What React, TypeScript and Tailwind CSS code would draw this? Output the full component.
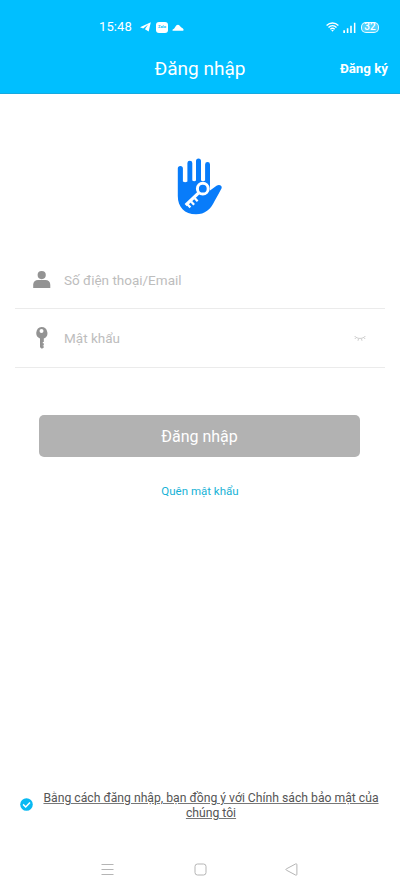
import { useState } from 'react'

function StatusBar() {
  return (
    <div className="flex h-[44px] items-center pl-[99px] pr-[21px] pt-[10px] text-white">
      <span className="w-[41px] text-[13px] leading-4 tracking-[0.1px]">15:48</span>
      <svg className="h-[10px] w-[11px]" viewBox="0 0 11 10" fill="currentColor">
        <path d="M10.8.3 0 5.2l3.200 1.300L8 2.500 4.900 7.200 8.700 9.600z" />
      </svg>
      <span className="ml-[5px] flex h-[11px] w-[12px] items-center justify-center rounded-[3px] bg-white text-[4px] font-bold leading-none text-[#00bfff]">
        Zalo
      </span>
      <svg className="ml-[4px] mt-[1px] h-[7px] w-[12px]" viewBox="0 0 12 7" fill="currentColor">
        <path d="M.9 6.700C.2 6.700.2 5.400 1.500 5 2.900 4.600 3.600.7 5.900.7c1.600 0 2.200 1.700 3.200 2.500.8.700 2.500 1.200 2.500 2.500 0 .7-.4 1-1 1z" />
      </svg>
      <svg className="ml-auto h-[10px] w-[13px]" viewBox="0 0 13 10" fill="none" stroke="currentColor" strokeWidth="1.4">
        <path d="M.6 3.400C4 .1 9 .1 12.400 3.400M2.500 5.400c2.300-2.200 5.700-2.200 8 0M4.300 7.200c1.300-1.100 3.100-1.100 4.400 0" />
        <path d="M5.200 8.100h2.600L6.500 9.700z" fill="currentColor" stroke="none" />
      </svg>
      <svg className="ml-[4px] h-[11px] w-[13px]" viewBox="0 0 13 11" fill="currentColor">
        <path d="M.3 8.200h1.700V11H.3zM3.800 6.300h1.600V11H3.800zM7.200 3.700h1.600V11H7.200zM10.900.7h1.500V11h-1.500z" />
      </svg>
      <span className="ml-[5px] flex h-[11px] w-[18px] items-center justify-center rounded-[5px] border border-white/90 bg-white/30 text-[10px] font-medium leading-none">
        32
      </span>
    </div>
  )
}

function Logo() {
  return (
    <svg className="h-[57px] w-[46px]" viewBox="0 0 46 57">
      <path
        fill="#087cfa"
        d="M.8 10.500a2.550 2.550 0 0 1 5.100 0V23.500q2.250 1.600 4.500 0V5.100a2.450 2.450 0 0 1 4.900 0V22.500q1.850 1.500 3.700 0V3.100a2.500 2.500 0 0 1 5 0V22.500q2.050 1.500 4.100 0V6.500a2.450 2.450 0 0 1 4.900 0V32.500l6.500-4.700c2.900-1.900 6 .1 5.100 2.400-2.300 4.400-4.700 8.400-7 12.800C33.500 51.500 28 56.300 19 56.300 7.500 56.300.8 49 .8 38z"
      />
      <circle cx="25.800" cy="30.700" r="5.400" fill="#087cfa" stroke="#fff" strokeWidth="3" />
      <path d="M22.200 34.300 8.700 47.200" stroke="#fff" strokeWidth="3.200" />
      <path
        d="M17.600 40l3 3.200M14.100 43.500l3 3.200M10.600 46.500l2.800 2.900"
        fill="none"
        stroke="#fff"
        strokeWidth="2.300"
      />
    </svg>
  )
}

export default function App() {
  const [account, setAccount] = useState('')
  const [password, setPassword] = useState('')
  const [agreed, setAgreed] = useState(true)

  return (
    <div className="flex h-[890px] w-[400px] flex-col overflow-hidden bg-white font-['Roboto','Noto_Sans',sans-serif]">
      <header className="h-[94px] shrink-0 border-b border-[#16a9df] bg-[#00bfff] text-white">
        <StatusBar />
        <div className="grid h-[49px] grid-cols-[1fr_auto_1fr] items-center pr-[12px]">
          <h1 className="col-start-2 pl-[12px] text-[19px] leading-6">Đăng nhập</h1>
          <button className="justify-self-end text-[13.300px] font-bold">Đăng ký</button>
        </div>
      </header>

      <main className="flex flex-1 flex-col">
        <div className="flex justify-center pt-[64px]">
          <Logo />
        </div>

        <form className="mt-[36px] px-[15px]" onSubmit={(e) => e.preventDefault()}>
          <label className="flex h-[58px] items-center border-b border-[#ebebeb] pl-[18px]">
            <svg className="h-[18px] w-[18px]" viewBox="0 0 18 18" fill="#939393">
              <circle cx="8.700" cy="4.100" r="4.100" />
              <path d="M.2 17v-3.300C.2 10.800 2.300 9 5 9h7.500c2.700 0 4.800 1.800 4.800 4.700V17z" />
            </svg>
            <input
              className="ml-[13px] mt-[2px] w-[260px] text-[13.500px] placeholder:text-[#bdbdbd] focus:outline-none"
              placeholder="Số điện thoại/Email"
              value={account}
              onChange={(e) => setAccount(e.target.value)}
            />
          </label>
          <label className="flex h-[59px] items-center border-b border-[#ebebeb] pl-[20px]">
            <svg className="h-[22px] w-[13px]" viewBox="0 0 13 22" fill="#939393">
              <path
                fillRule="evenodd"
                d="M6.500.1a6 6 0 0 1 2.300 11.500V15h-1v1.200h1v2.200h-1v.9h1v1.100L6.900 21.700 5 20.200v-8.600A6 6 0 0 1 6.500.1m0 1.900a2 2 0 1 0 0 4 2 2 0 0 0 0-4"
              />
            </svg>
            <input
              className="ml-[16px] mt-px w-[260px] text-[13.500px] placeholder:text-[#bdbdbd] focus:outline-none"
              type="password"
              placeholder="Mật khẩu"
              value={password}
              onChange={(e) => setPassword(e.target.value)}
            />
            <svg className="ml-auto mr-[19px] h-[7px] w-[12px]" viewBox="0 0 12 7" fill="none" stroke="#c8c8c8" strokeWidth=".9">
              <path d="M.6 1C3 4.200 9 4.200 11.400 1M2.200 2.500.8 4M4.600 3.500 4 5.800M7.400 3.500 8 5.800M9.800 2.500l1.400 1.500" />
            </svg>
          </label>
          <button className="ml-[24px] mt-[47px] flex h-[42px] w-[321px] items-center justify-center rounded-[5px] bg-[#b2b2b2] pt-[2px] text-[16px] text-white">
            Đăng nhập
          </button>
        </form>

        <button className="mt-[26px] self-center text-[11.500px] leading-4 text-[#16b2d6]">Quên mật khẩu</button>

        <div className="mt-auto flex items-center pb-[19px] pl-[20px]">
          <button className="-mt-[4px]" aria-label="Đồng ý" onClick={() => setAgreed(!agreed)}>
            <svg className="h-[13px] w-[13px]" viewBox="0 0 13 13">
              <circle cx="6.500" cy="6.500" r="6.300" fill={agreed ? '#08b9f2' : '#c8c8c8'} />
              <path d="M3.100 6.400 5.700 9 10 4.500" fill="none" stroke="#fff" strokeWidth="1.500" />
            </svg>
          </button>
          <p className="ml-[6px] w-[344px] whitespace-nowrap text-center text-[12.200px] leading-[15px] text-[#555] underline decoration-[#777] underline-offset-1">
            Bằng cách đăng nhập, bạn đồng ý với Chính sách bảo mật của
            <br />
            chúng tôi
          </p>
        </div>
      </main>

      <nav className="flex h-[50px] shrink-0 items-center justify-between px-[101px] pt-[8px] text-[#b5b5b5]">
        <svg className="h-[13px] w-[13px]" viewBox="0 0 13 13" fill="none" stroke="currentColor">
          <path d="M.5 1.500h12M.5 6.500h12M.5 11.500h12" />
        </svg>
        <svg className="h-[13px] w-[13px]" viewBox="0 0 13 13" fill="none" stroke="currentColor">
          <rect x="1" y="1" width="11" height="11" rx="2.500" />
        </svg>
        <svg className="-ml-px mr-px h-[13px] w-[13px]" viewBox="0 0 13 13" fill="none" stroke="currentColor" strokeLinejoin="round">
          <path d="M10.700.9 1.300 5.900q-.9.600 0 1.200l9.400 5q1.200.4 1.200-.8V1.700q0-1.200-1.200-.8z" />
        </svg>
      </nav>
    </div>
  )
}
